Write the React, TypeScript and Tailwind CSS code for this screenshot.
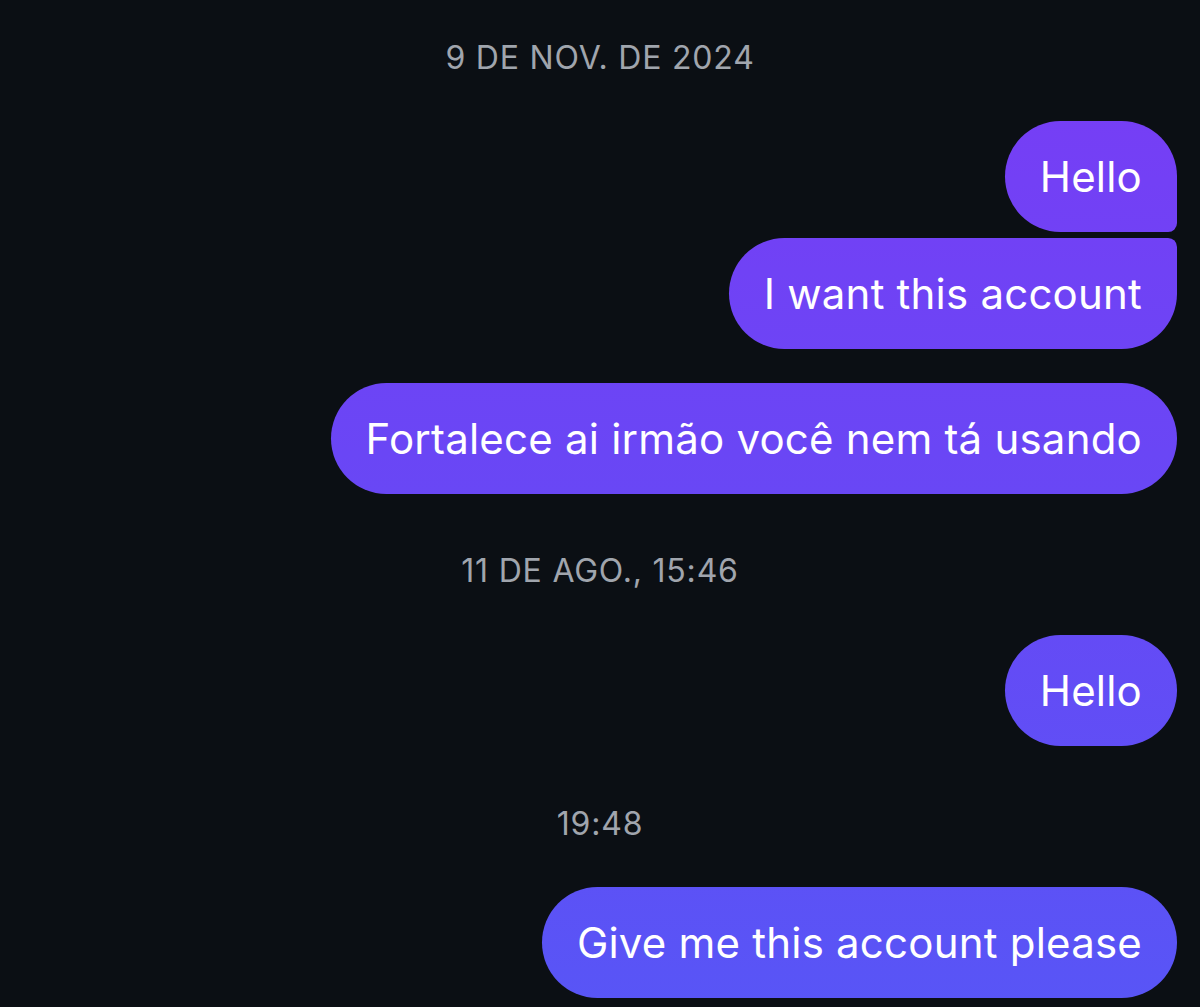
import React from "react";

const bubbleBase =
  "h-[111px] flex items-center px-[35px] text-white text-[42px] leading-none tracking-[0.005em] bg-fixed bg-[linear-gradient(to_bottom,#793cf5_0%,#6a46f5_45%,#5855f6_100%)]";

function Stamp({ children }: { children: React.ReactNode }) {
  return (
    <div className="h-[36px] flex items-center justify-center text-[32px] leading-none text-[#a0a5ad] tracking-[0.025em]">
      {children}
    </div>
  );
}

export default function App() {
  return (
    <div
      className="w-[1200px] h-[1007px] bg-[#0b0f14] overflow-hidden flex flex-col pr-[23px] pt-[40px]"
      style={{ fontFamily: "Inter, 'Noto Sans', sans-serif" }}
    >
      <div className="pl-[23px]">
        <Stamp>9 DE NOV. DE 2024</Stamp>
      </div>
      <div className="flex flex-col items-end mt-[45px]">
        <div className={`${bubbleBase} rounded-[56px] rounded-br-[9px]`}>Hello</div>
        <div className={`${bubbleBase} mt-[6px] rounded-[56px] rounded-tr-[9px]`}>
          I want this account
        </div>
        <div className={`${bubbleBase} mt-[34px] rounded-[56px]`}>
          Fortalece ai irmão você nem tá usando
        </div>
      </div>
      <div className="pl-[23px] mt-[59px]">
        <Stamp>11 DE AGO., 15:46</Stamp>
      </div>
      <div className="flex flex-col items-end mt-[46px]">
        <div className={`${bubbleBase} rounded-[56px]`}>Hello</div>
      </div>
      <div className="pl-[23px] mt-[60px]">
        <Stamp>19:48</Stamp>
      </div>
      <div className="flex flex-col items-end mt-[45px]">
        <div className={`${bubbleBase} rounded-[56px]`}>Give me this account please</div>
      </div>
    </div>
  );
}
